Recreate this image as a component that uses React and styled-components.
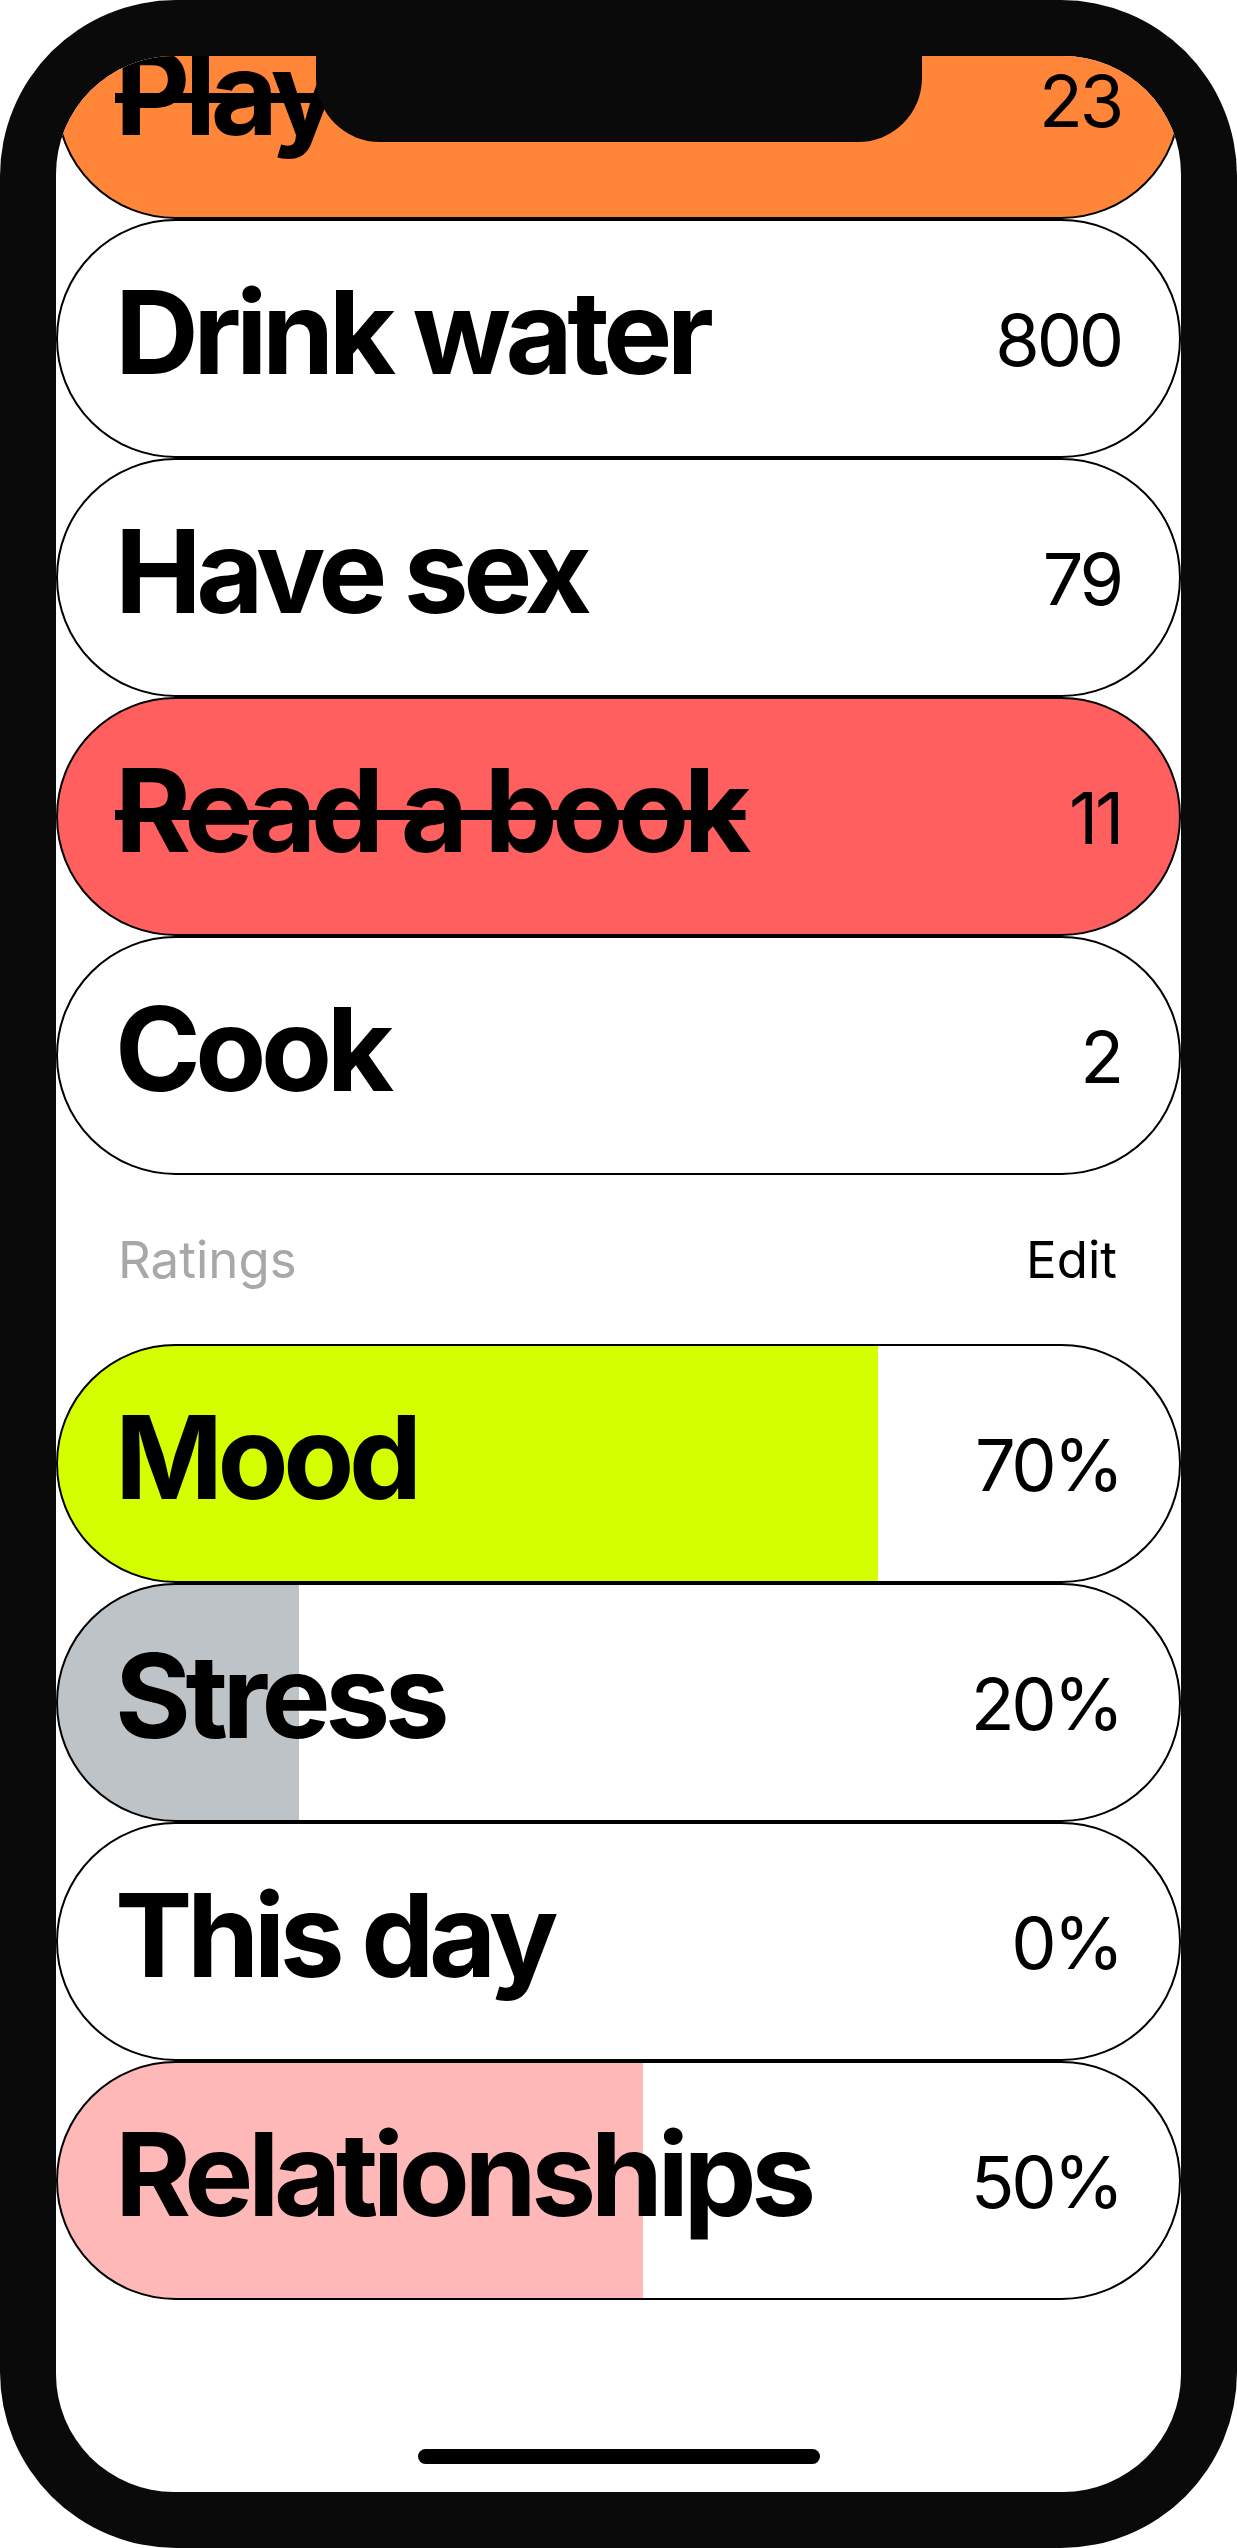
import React from 'react';
import styled, { createGlobalStyle } from 'styled-components';

const GlobalStyle = createGlobalStyle`
  html, body {
    margin: 0;
    padding: 0;
    background: #fff;
  }
  body {
    font-family: Inter, "Noto Sans", "Liberation Sans", sans-serif;
    -webkit-font-smoothing: antialiased;
  }
`;

const Phone = styled.div`
  width: 1237px;
  height: 2548px;
  box-sizing: border-box;
  padding: 56px;
  background: #0a0a0a;
  border-radius: 176px;
`;

const Screen = styled.div`
  position: relative;
  width: 1125px;
  height: 2436px;
  background: #fff;
  border-radius: 118px;
  overflow: hidden;
`;

// list is scrolled a little, the first row sits partly under the top edge
const Scroller = styled.div`
  display: flex;
  flex-direction: column;
  margin-top: -76px;
`;

const Pill = styled.div`
  height: 239px;
  box-sizing: border-box;
  display: flex;
  align-items: center;
  justify-content: space-between;
  padding: 0 58px 0 57px;
  border: 2px solid #000;
  border-radius: 9999px;
  background: ${p => p.$fill != null
    ? `linear-gradient(90deg, ${p.$color} ${p.$fill}px, #fff ${p.$fill}px)`
    : p.$color || '#fff'};
`;

const Title = styled.span`
  font-size: 116px;
  line-height: 1;
  font-weight: 700;
  letter-spacing: -0.047em;
  color: #000;
  margin-bottom: 13px;
  white-space: nowrap;
  text-decoration: ${p => (p.$done ? 'line-through' : 'none')};
  text-decoration-thickness: 10px;
`;

const Count = styled.span`
  font-size: 72px;
  line-height: 1;
  font-weight: 400;
  letter-spacing: -0.045em;
  color: #000;
  margin-top: 3px;
`;

const SectionHeader = styled.div`
  height: 169px;
  display: flex;
  align-items: center;
  justify-content: space-between;
  padding: 0 64px 0 62px;
  font-size: 51px;
  line-height: 1;
`;

const SectionLabel = styled.span`
  color: #a8a8a8;
`;

const EditButton = styled.span`
  color: #000;
`;

const Notch = styled.div`
  position: absolute;
  top: 0;
  left: 260px;
  width: 606px;
  height: 86px;
  background: #0a0a0a;
  border-radius: 0 0 64px 64px;
`;

const HomeIndicator = styled.div`
  position: absolute;
  left: 362px;
  bottom: 28px;
  width: 402px;
  height: 15px;
  border-radius: 8px;
  background: #000;
`;

const tasks = [
  { title: 'Play', count: 23, color: '#ff8539', done: true },
  { title: 'Drink water', count: 800 },
  { title: 'Have sex', count: 79 },
  { title: 'Read a book', count: 11, color: '#ff5f5f', done: true },
  { title: 'Cook', count: 2 },
];

// fill = width of the coloured part in px
const ratings = [
  { title: 'Mood', value: 70, color: '#d4ff00', fill: 820 },
  { title: 'Stress', value: 20, color: '#bec3c7', fill: 241 },
  { title: 'This day', value: 0, color: '#fff', fill: 0 },
  { title: 'Relationships', value: 50, color: '#ffb8b8', fill: 585 },
];

export default function App() {
  return (
    <>
      <GlobalStyle />
      <Phone>
        <Screen>
          <Scroller>
            {tasks.map(t => (
              <Pill key={t.title} $color={t.color}>
                <Title $done={t.done}>{t.title}</Title>
                <Count>{t.count}</Count>
              </Pill>
            ))}
            <SectionHeader>
              <SectionLabel>Ratings</SectionLabel>
              <EditButton>Edit</EditButton>
            </SectionHeader>
            {ratings.map(r => (
              <Pill key={r.title} $color={r.color} $fill={r.fill}>
                <Title>{r.title}</Title>
                <Count>{r.value}%</Count>
              </Pill>
            ))}
          </Scroller>
          <Notch />
          <HomeIndicator />
        </Screen>
      </Phone>
    </>
  );
}
